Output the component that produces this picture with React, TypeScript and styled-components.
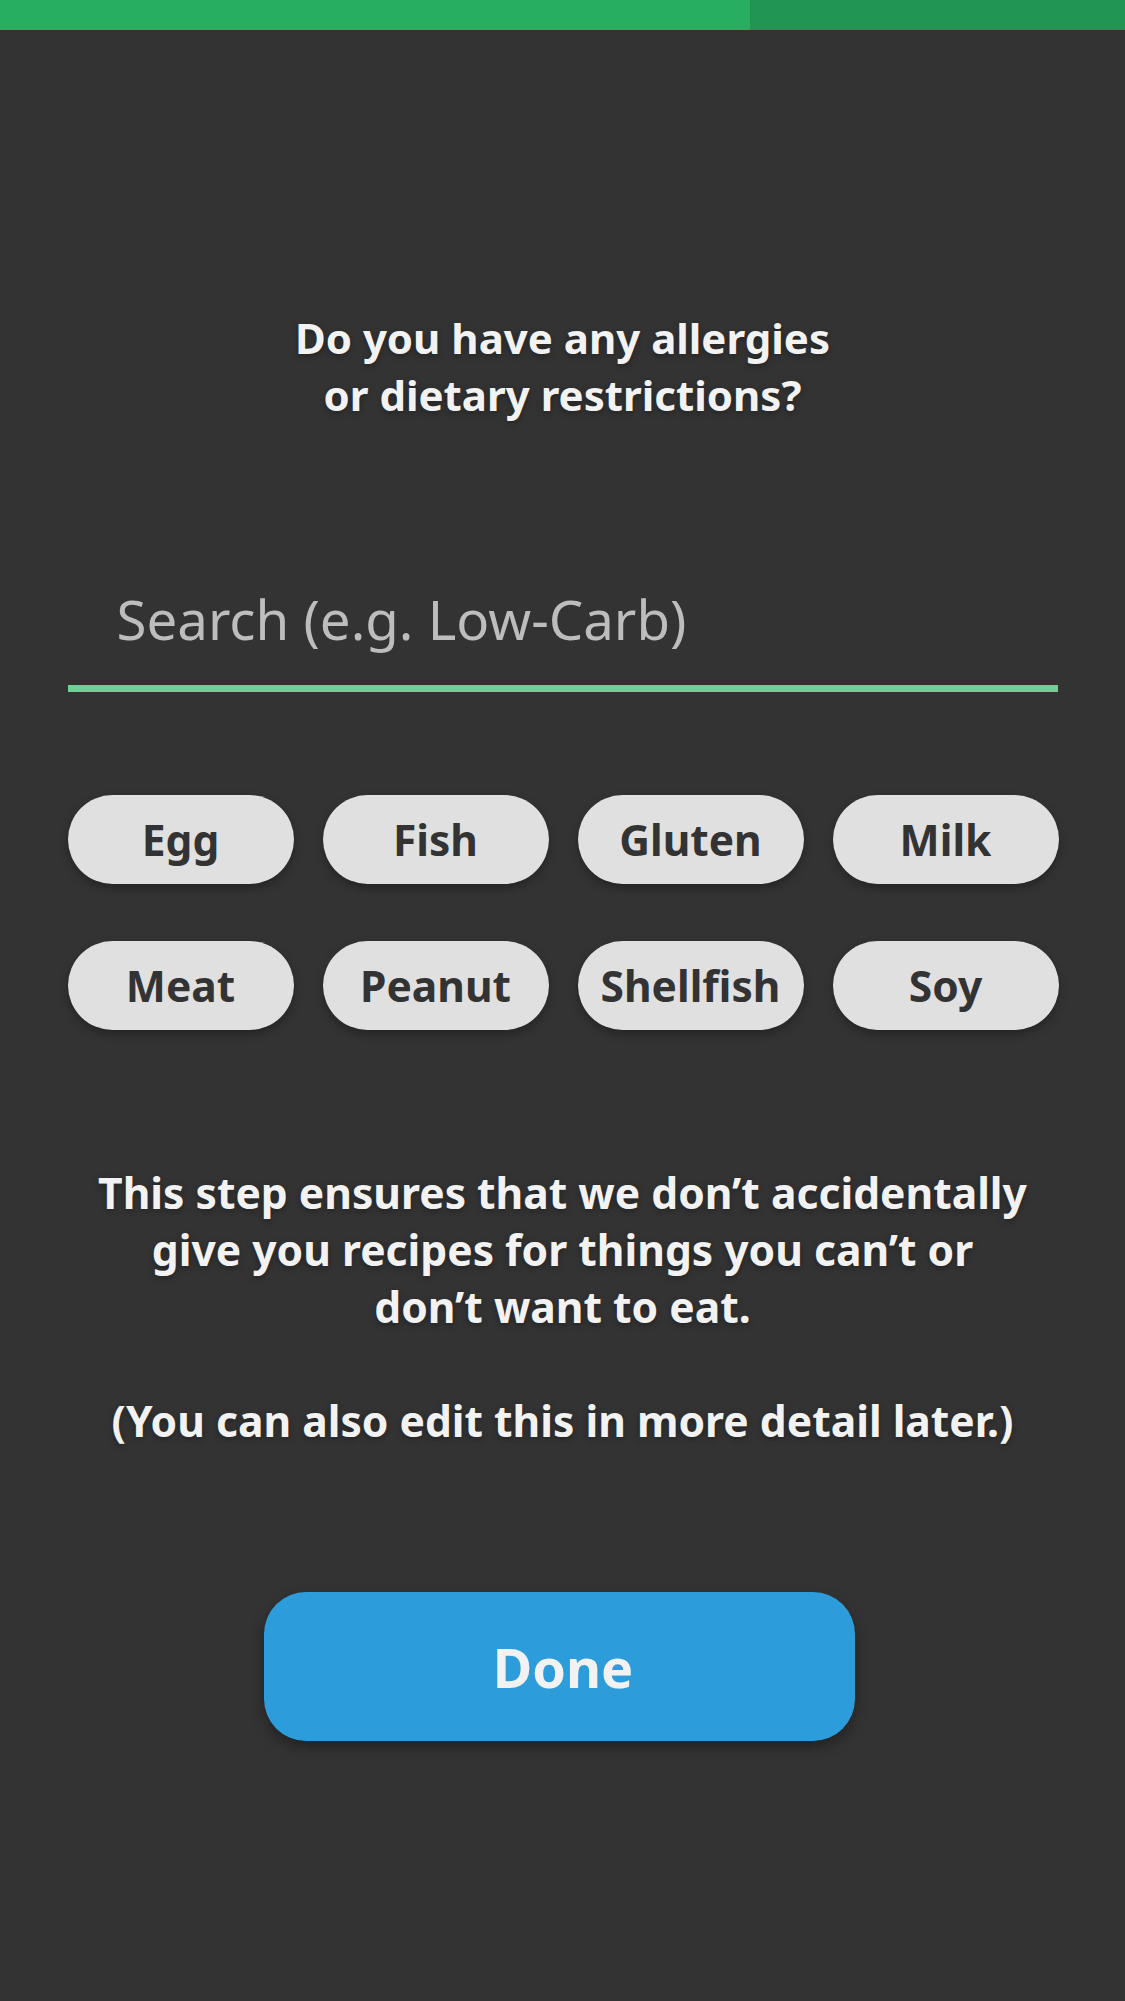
import React from "react";
import styled, { createGlobalStyle } from "styled-components";

const Global = createGlobalStyle`
  html, body { margin: 0; padding: 0; background: #333333; }
  body { font-family: "Noto Sans", "Open Sans", sans-serif; }
  * { box-sizing: border-box; }
`;

const Page = styled.div`
  width: 1125px;
  min-height: 2001px;
  background: #333333;
  display: flex;
  flex-direction: column;
  align-items: center;
`;

const Progress = styled.div`
  width: 100%;
  height: 30px;
  display: flex;
`;

const ProgressSeg = styled.div<{ $grow: number; $color: string }>`
  flex: ${(p) => p.$grow};
  background: ${(p) => p.$color};
`;

const Title = styled.h1`
  margin: 279px 0 0;
  font-size: 42px;
  line-height: 57px;
  font-weight: 700;
  color: #f2f2f2;
  text-align: center;
  text-shadow: 0 2px 6px rgba(0, 0, 0, 0.35);
`;

const Search = styled.input`
  margin-top: 162px;
  width: 990px;
  height: 107px;
  background: transparent;
  border: none;
  border-bottom: 7px solid #6fcf97;
  outline: none;
  padding: 0 0 32px 49px;
  font-family: "Noto Sans", "Open Sans", sans-serif;
  font-size: 54.6px;
  line-height: 68px;
  color: #f2f2f2;
  &::placeholder { color: #bdbdbd; }
`;

const ChipGrid = styled.div`
  margin-top: 103px;
  width: 990px;
  display: grid;
  grid-template-columns: repeat(4, 226px);
  column-gap: 29px;
  row-gap: 57px;
`;

const Chip = styled.button`
  height: 89px;
  border: none;
  border-radius: 45px;
  background: #e0e0e0;
  color: #333333;
  font-family: "Noto Sans", "Open Sans", sans-serif;
  font-size: 42.5px;
  font-weight: 700;
  box-shadow: 0 4px 10px rgba(0, 0, 0, 0.3);
  padding: 0;
  cursor: pointer;
`;

const Info = styled.div`
  margin-top: 134px;
  width: 1000px;
  text-align: center;
  color: #f2f2f2;
  font-size: 42.6px;
  line-height: 57px;
  font-weight: 700;
  text-shadow: 0 2px 6px rgba(0, 0, 0, 0.35);
`;

const InfoPara = styled.p`
  margin: 0;
  & + & { margin-top: 57px; }
`;

const DoneButton = styled.button`
  margin: 143px 7px 0 0;
  width: 591px;
  height: 149px;
  border: none;
  border-radius: 42px;
  background: #2d9cdb;
  color: #f2f2f2;
  font-family: "Noto Sans", "Open Sans", sans-serif;
  font-size: 54px;
  font-weight: 700;
  padding: 0 0 0 8px;
  box-shadow: 0 6px 14px rgba(0, 0, 0, 0.35);
  cursor: pointer;
`;

const chips = ["Egg", "Fish", "Gluten", "Milk", "Meat", "Peanut", "Shellfish", "Soy"];

export default function App() {
  return (
    <Page>
      <Global />
      <Progress>
        <ProgressSeg $grow={750} $color="#27ae60" />
        <ProgressSeg $grow={375} $color="#219653" />
      </Progress>
      <Title>
        Do you have any allergies
        <br />
        or dietary restrictions?
      </Title>
      <Search placeholder="Search (e.g. Low-Carb)" />
      <ChipGrid>
        {chips.map((c) => (
          <Chip key={c}>{c}</Chip>
        ))}
      </ChipGrid>
      <Info>
        <InfoPara>
          This step ensures that we don’t accidentally
          <br />
          give you recipes for things you can’t or
          <br />
          don’t want to eat.
        </InfoPara>
        <InfoPara>(You can also edit this in more detail later.)</InfoPara>
      </Info>
      <DoneButton>Done</DoneButton>
    </Page>
  );
}
